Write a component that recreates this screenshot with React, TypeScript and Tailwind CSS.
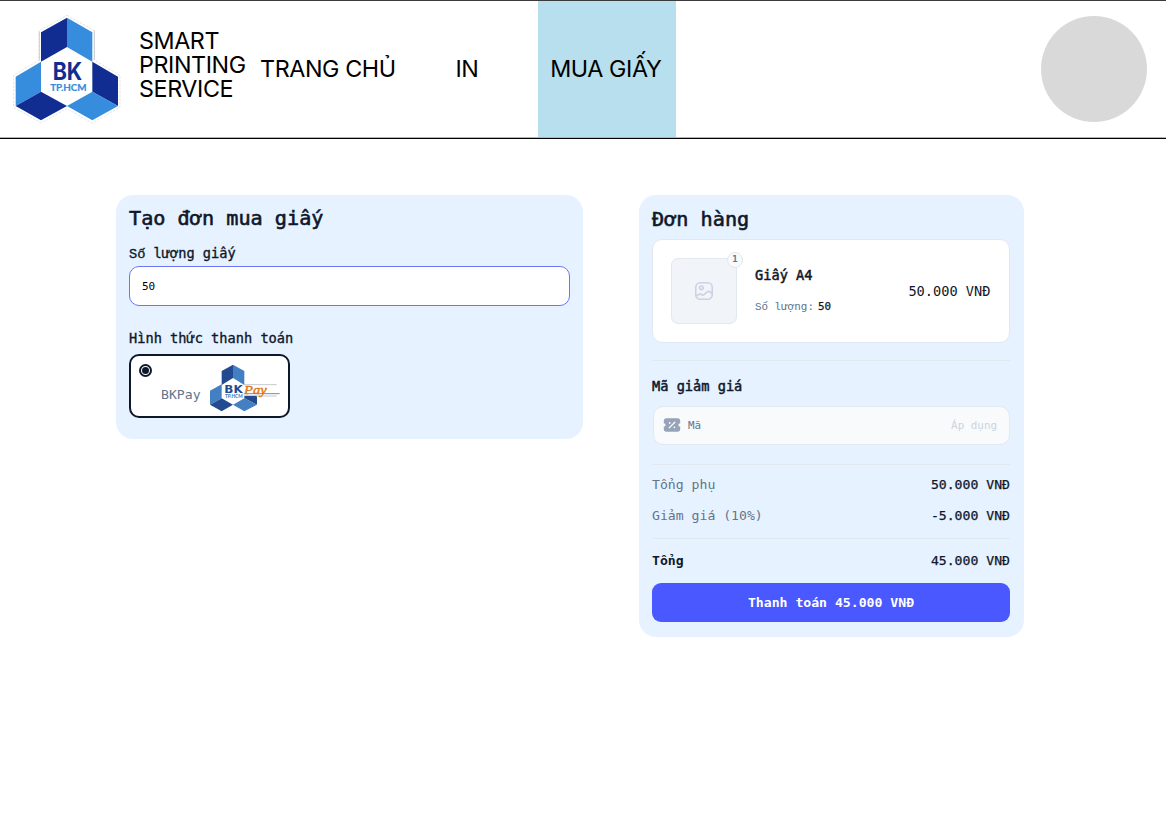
import type { ReactNode } from "react";

function BkLogo() {
  return (
    <svg width="108" height="110" viewBox="40 42 324 330" className="shrink-0">
      <path
        d="M202 46 L284 92 V180 L361 226 V322 L278 369 L202 326 L124 369 L42 322 V226 L118 181 V92 Z"
        fill="#fff"
        stroke="#d4d4d4"
        strokeWidth="2"
        strokeDasharray="7 4"
      />
      <path d="M284 92 V180 M119 95 V181" stroke="#c4c4c4" strokeWidth="2.5" />
      <path d="M202 53 L124 97 V185 L202 141 Z" fill="#112d91" />
      <path d="M202 53 L278 97 V185 L202 141 Z" fill="#368cdd" />
      <path d="M124 185 L48 230 V318 L124 275 Z" fill="#368cdd" />
      <path d="M48 318 L124 275 L202 318 L124 361 Z" fill="#112d91" />
      <path d="M278 185 L355 230 V318 L278 275 Z" fill="#112d91" />
      <path d="M355 318 L278 275 L202 318 L278 361 Z" fill="#368cdd" />
      <text x="159" y="239" textLength="88" lengthAdjust="spacingAndGlyphs" fontFamily="Inter, sans-serif" fontWeight="700" fontSize="71" fill="#112d91">
        BK
      </text>
      <text x="152" y="272" textLength="108" lengthAdjust="spacingAndGlyphs" fontFamily="Lato, sans-serif" fontWeight="700" fontSize="28" fill="#368cdd" stroke="#368cdd" strokeWidth="0.6">
        TP.HCM
      </text>
    </svg>
  );
}

function BkPayLogo() {
  return (
    <svg width="72" height="50" viewBox="297 128 216 150" className="shrink-0">
      <path d="M369 133 L335 152 V194 L369 173 Z" fill="#234a8e" />
      <path d="M369 133 L403 152 V194 L369 173 Z" fill="#427fc3" />
      <path d="M335 192 L300 211 V253 L335 234 Z" fill="#427fc3" />
      <path d="M300 253 L335 234 L369 253 L335 273 Z" fill="#234a8e" />
      <path d="M403 226 H441 V253 L403 234 Z" fill="#234a8e" />
      <path d="M441 253 L403 234 L369 253 L403 273 Z" fill="#427fc3" />
      <path d="M402 193 H500" stroke="#b9bec4" strokeWidth="2.5" />
      <path d="M410 220 H509" stroke="#5c7488" strokeWidth="2.5" />
      <path d="M438 227 H500" stroke="#b9bec4" strokeWidth="2.5" />
      <text x="343" y="219" textLength="55" lengthAdjust="spacingAndGlyphs" fontFamily="'DejaVu Sans', sans-serif" fontWeight="700" fontSize="30" fill="#234a8e">
        BK
      </text>
      <text x="345" y="234" textLength="53" lengthAdjust="spacingAndGlyphs" fontFamily="Lato, sans-serif" fontWeight="900" fontSize="17" fill="#427fc3">
        TP.HCM
      </text>
      <text x="402" y="220" textLength="68" lengthAdjust="spacingAndGlyphs" fontFamily="'Liberation Serif', serif" fontStyle="italic" fontSize="38" fill="#df761b" stroke="#df761b" strokeWidth="1.2">
        Pay
      </text>
    </svg>
  );
}

function ImageIcon() {
  return (
    <svg width="20" height="20" viewBox="0 0 20 20" fill="none" stroke="#cbd2e1" strokeWidth="1.6" className="shrink-0">
      <rect x="1.75" y="1.75" width="16.5" height="16.5" rx="4.5" />
      <circle cx="7.4" cy="6.8" r="1.8" />
      <path d="M2.3 15.2 L5 13.3 C6 12.6 6.8 12.9 7.6 13.6 C8.3 14.3 9.2 14.2 9.9 13.6 L13.3 10.8 C14.2 10.1 15.2 10.2 16 10.9 L18 12.6" />
    </svg>
  );
}

function CouponIcon() {
  return (
    <svg width="18" height="14" viewBox="0 0 18 14" className="mb-px shrink-0">
      <path
        d="M3.5 0.2 H14.5 Q17.2 0.2 17.2 3 V5.2 A1.8 1.8 0 0 0 17.2 8.8 V11 Q17.2 13.8 14.5 13.8 H3.5 Q0.8 13.8 0.8 11 V8.8 A1.8 1.8 0 0 0 0.8 5.2 V3 Q0.8 0.2 3.5 0.2 Z"
        fill="#97a3b9"
      />
      <path d="M6.2 9.9 L11.8 4.2" stroke="#fff" strokeWidth="1.3" strokeLinecap="round" />
      <circle cx="6.7" cy="4.9" r="0.9" fill="#fff" />
      <circle cx="11.4" cy="9.3" r="0.9" fill="#fff" />
    </svg>
  );
}

function Row({ label, value }: { label: ReactNode; value: string }) {
  return (
    <div className="flex items-center justify-between text-[13.15px] leading-5 text-[#0f172a]">
      {label}
      <span className="[-webkit-text-stroke:0.25px]">{value}</span>
    </div>
  );
}

export default function App() {
  return (
    <div className="flex h-[831px] w-[1166px] flex-col overflow-hidden bg-white font-['DejaVu_Sans_Mono',monospace] text-[#0f172a]">
      <header className="flex h-[139px] shrink-0 border-t border-b border-t-[#3a3a3c] border-b-black font-['Inter',sans-serif] text-[23.3px] tracking-[-0.4px] text-black">
        <div className="flex w-full border-b border-[#b5b5b5]">
          <div className="flex w-[248px] shrink-0 pl-[13px]">
            <div className="pt-[13px]">
              <BkLogo />
            </div>
            <div className="ml-[18px] flex flex-col pt-[27.5px] leading-[24.4px]">
              <span>SMART</span>
              <span>PRINTING</span>
              <span>SERVICE</span>
            </div>
          </div>
          <nav className="flex shrink-0 items-center">
            <a className="w-[160px] pl-3 whitespace-nowrap">TRANG CHỦ</a>
            <a className="w-[129.5px] pl-[47.5px]">IN</a>
            <a className="flex h-full w-[138.5px] items-center justify-center bg-[#b8dfed] pr-[2px] whitespace-nowrap">MUA GIẤY</a>
          </nav>
          <div className="mt-[15px] mr-[19px] ml-auto size-[106px] rounded-full bg-[#d9d9d9]" />
        </div>
      </header>

      <main className="flex items-start pt-14 pl-[116px]">
        <section className="h-[244px] w-[467px] rounded-[17px] bg-[#e6f2ff] px-[13px]">
          <h1 className="pt-[9px] text-[20.2px] leading-[28px] [-webkit-text-stroke:0.6px]">Tạo đơn mua giấy</h1>
          <h2 className="mt-[11px] h-5 text-[13.65px] leading-5 [-webkit-text-stroke:0.35px]">
            <span className="font-['Liberation_Mono',monospace]">Số</span> lượng giấy
          </h2>
          <div className="mt-[3px] flex h-10 items-center rounded-[10px] border border-[#6b75fa] bg-white px-3 pt-[2px] text-[11px] text-black">50</div>
          <h2 className="mt-[22px] text-[13.65px] leading-5 [-webkit-text-stroke:0.35px]">Hình thức thanh toán</h2>
          <div className="mt-[6px] flex h-[64px] w-[161px] rounded-[10px] border-2 border-[#0f172a] bg-white">
            <div className="mt-[8px] ml-[8px] flex size-[13px] items-center justify-center rounded-full border-2 border-[#0f172a]">
              <div className="size-[7px] rounded-full bg-[#0f172a]" />
            </div>
            <span className="mt-[29px] ml-[9px] text-[13.15px] leading-5 text-[#64748b]">BKPay</span>
            <div className="mt-[6.5px] ml-[8px]">
              <BkPayLogo />
            </div>
          </div>
        </section>

        <section className="ml-14 h-[442px] w-[385px] rounded-[17px] bg-[#e6f2ff] pr-[14px] pl-[13px]">
          <h1 className="pt-[10px] text-[20.2px] leading-[28px] [-webkit-text-stroke:0.6px]">Đơn hàng</h1>
          <div className="mt-[6px] flex h-[104px] w-[357.5px] items-center rounded-[10px] border border-[#e2e8f0] bg-white px-[18px]">
            <div className="relative flex size-[66px] items-center justify-center rounded-[7px] border border-[#e2e8f0] bg-[#f1f4f9]">
              <ImageIcon />
              <span className="absolute -top-[7px] -right-[7px] flex size-4 items-center justify-center rounded-full border border-[#e2e8f0] bg-[#f8fafc] text-[9px] font-bold text-[#64748b]">1</span>
            </div>
            <div className="ml-[18px]">
              <p className="text-[13.65px] leading-5 [-webkit-text-stroke:0.5px]">Giấy A4</p>
              <p className="mt-[12px] flex h-5 gap-[4px] text-[10.9px] leading-5 text-[#64748b]">
                <span>
                  <span className="font-['Liberation_Mono',monospace]">Số</span> lượng:
                </span>
                <span className="text-[#0f172a] [-webkit-text-stroke:0.25px]">50</span>
              </p>
            </div>
            <span className="ml-auto pt-px text-[13.65px]">50.000 VNĐ</span>
          </div>
          <div className="mt-[17px] border-t border-[#e2e8f0]" />
          <h2 className="mt-[15px] text-[13.65px] leading-5 [-webkit-text-stroke:0.5px]">Mã giảm giá</h2>
          <div className="mt-[10px] ml-px flex h-[39px] items-center rounded-[10px] border border-[#e2e8f0] bg-[#f8fafc] pr-[12px] pl-[9px] text-[10.9px] text-[#64748b]">
            <CouponIcon />
            <span className="ml-[7px] pt-px">Mã</span>
            <span className="ml-auto pt-px text-[#cbd5e1]">Áp dụng</span>
          </div>
          <div className="mt-[19px] border-t border-[#e2e8f0]" />
          <div className="mt-[10px] flex flex-col gap-[11px]">
            <Row label={<span className="text-[#64748b]">Tổng phụ</span>} value="50.000 VNĐ" />
            <Row label={<span className="text-[#64748b]">Giảm giá (10%)</span>} value="-5.000 VNĐ" />
          </div>
          <div className="mt-[12px] mb-[12px] border-t border-[#e2e8f0]" />
          <Row label={<span className="font-bold">Tổng</span>} value="45.000 VNĐ" />
          <button className="mt-[12px] flex h-[39px] w-full items-center justify-center rounded-[9px] bg-[#4a58ff] text-[13.15px] font-bold text-white">
            Thanh toán 45.000 VNĐ
          </button>
        </section>
      </main>
    </div>
  );
}
